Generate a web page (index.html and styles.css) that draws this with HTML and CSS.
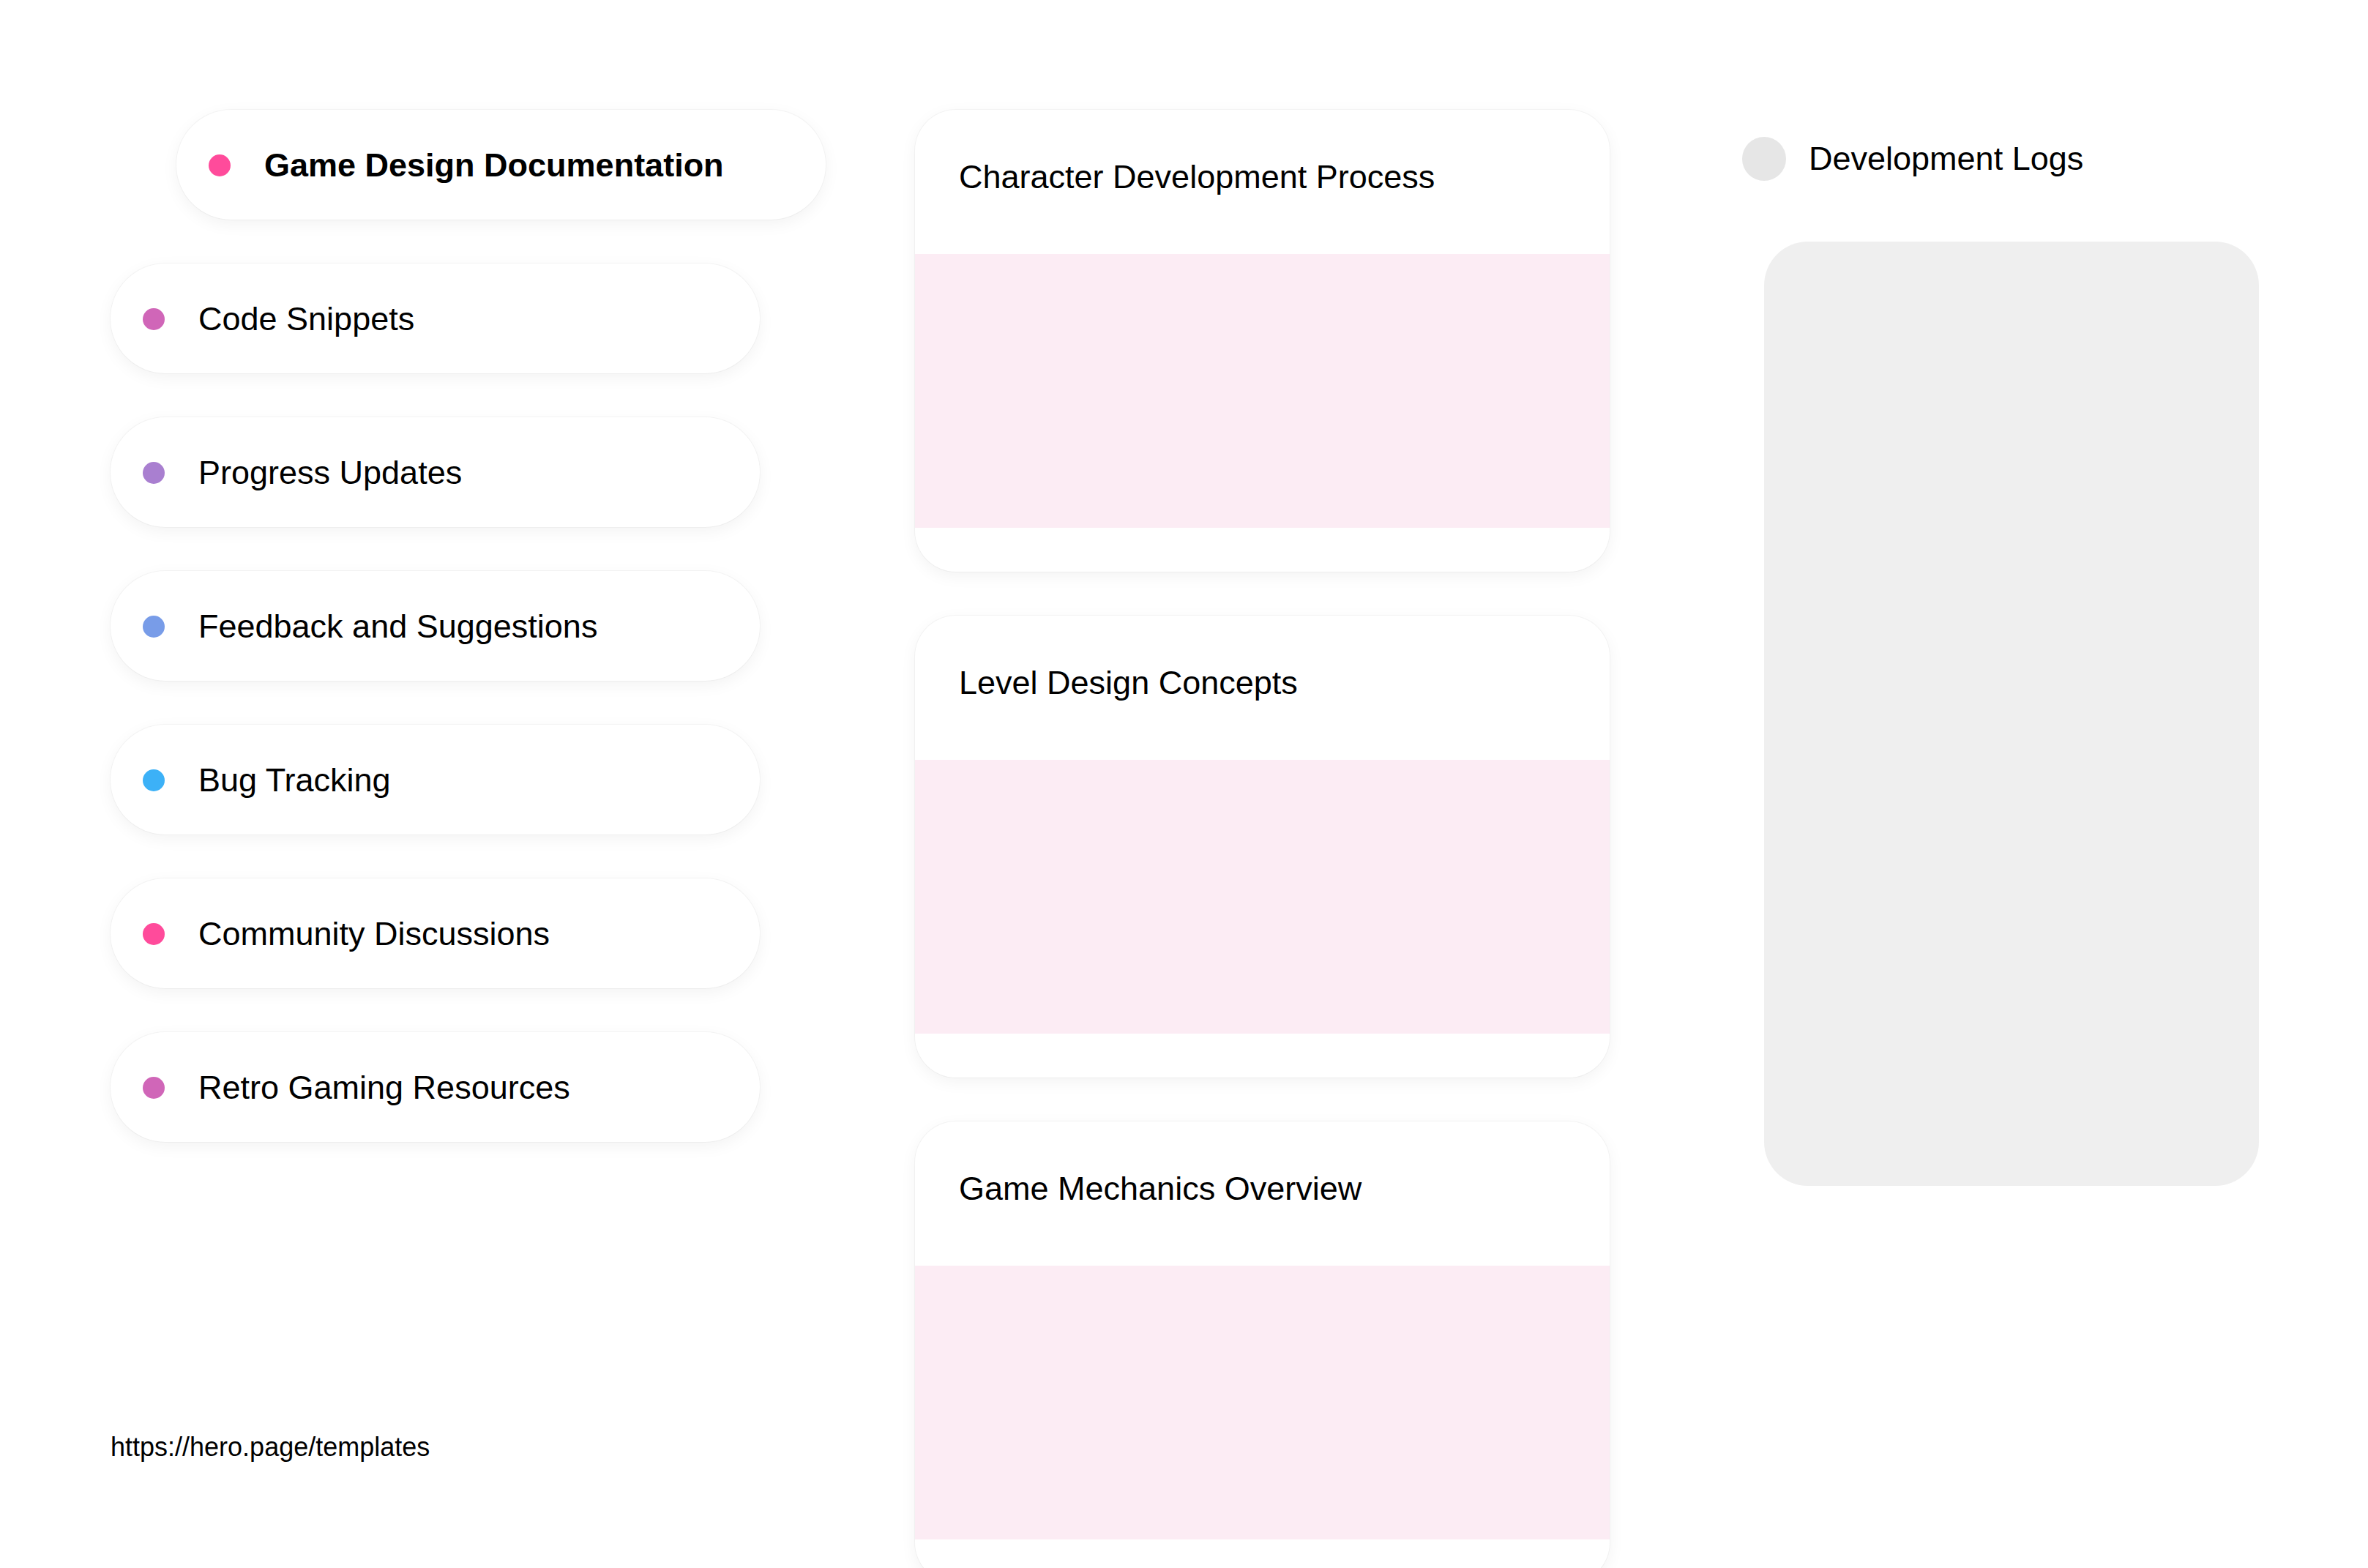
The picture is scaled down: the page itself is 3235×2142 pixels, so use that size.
FILE: index.html
```html
<!DOCTYPE html>
<html lang="en">
<head>
<meta charset="utf-8">
<title>Game Dev Hub</title>
<link rel="stylesheet" href="styles.css">
</head>
<body>
<div class="page">
  <nav class="sidebar">
    <div class="nav-item active"><span class="dot dot-pink"></span><span class="nav-label">Game Design Documentation</span></div>
    <div class="nav-item"><span class="dot dot-orchid"></span><span class="nav-label">Code Snippets</span></div>
    <div class="nav-item"><span class="dot dot-lavender"></span><span class="nav-label">Progress Updates</span></div>
    <div class="nav-item"><span class="dot dot-blue"></span><span class="nav-label">Feedback and Suggestions</span></div>
    <div class="nav-item"><span class="dot dot-sky"></span><span class="nav-label">Bug Tracking</span></div>
    <div class="nav-item"><span class="dot dot-pink"></span><span class="nav-label">Community Discussions</span></div>
    <div class="nav-item"><span class="dot dot-orchid"></span><span class="nav-label">Retro Gaming Resources</span></div>
    <div class="footer-link">https://hero.page/templates</div>
  </nav>

  <main class="cards">
    <section class="card">
      <h2 class="card-title">Character Development Process</h2>
      <div class="card-media"></div>
    </section>
    <section class="card">
      <h2 class="card-title">Level Design Concepts</h2>
      <div class="card-media"></div>
    </section>
    <section class="card">
      <h2 class="card-title">Game Mechanics Overview</h2>
      <div class="card-media"></div>
    </section>
  </main>

  <aside class="logs">
    <div class="logs-header"><span class="logs-avatar"></span><span class="logs-title">Development Logs</span></div>
    <div class="logs-panel"></div>
  </aside>
</div>
</body>
</html>
```

FILE: styles.css
```css
html, body {
  margin: 0;
  padding: 0;
  background: #ffffff;
}

body {
  font-family: "Liberation Sans", Arial, sans-serif;
  color: #000000;
  overflow: hidden;
}

.page {
  display: flex;
  align-items: flex-start;
  padding: 150px 0 0 151px;
}

.sidebar {
  width: 887px;
  display: flex;
  flex-direction: column;
  gap: 60px;
  flex: none;
}

.nav-item {
  height: 150px;
  box-sizing: border-box;
  width: 887px;
  border-radius: 75px;
  background: #ffffff;
  box-shadow: 0 0 0 1px rgba(0, 0, 0, 0.035), 0 6px 22px rgba(0, 0, 0, 0.05);
  display: flex;
  align-items: center;
  padding: 2px 44px 0;
  gap: 46px;
  font-size: 45px;
}

.nav-item.active {
  margin-left: 90px;
  font-weight: bold;
}

.dot {
  width: 30px;
  height: 30px;
  border-radius: 50%;
  flex: none;
}

.dot-pink { background: #ff4b9b; }
.dot-orchid { background: #d066b8; }
.dot-lavender { background: #a97fd0; }
.dot-blue { background: #789ce8; }
.dot-sky { background: #3cb1f7; }

.footer-link {
  margin-top: 336px;
  font-size: 36px;
  line-height: 41px;
}

.cards {
  margin-left: 212px;
  width: 949px;
  flex: none;
  display: flex;
  flex-direction: column;
  gap: 60px;
}

.card {
  background: #ffffff;
  border-radius: 56px;
  box-shadow: 0 0 0 1px rgba(0, 0, 0, 0.035), 0 6px 22px rgba(0, 0, 0, 0.05);
  padding-bottom: 60px;
  overflow: hidden;
}

.card-title {
  margin: 0;
  padding: 66px 60px 79px;
  font-size: 45px;
  font-weight: normal;
  line-height: 52px;
}

.card-media {
  height: 374px;
  background: #fcecf4;
}

.logs {
  margin-left: 181px;
  width: 706px;
  flex: none;
  display: flex;
  flex-direction: column;
  align-items: flex-start;
}

.logs-header {
  margin-top: 37px;
  display: flex;
  align-items: center;
  gap: 31px;
  font-size: 45px;
}

.logs-avatar {
  width: 60px;
  height: 60px;
  border-radius: 50%;
  background: #e6e6e6;
  flex: none;
}

.logs-panel {
  margin-top: 83px;
  margin-left: 30px;
  width: 676px;
  height: 1290px;
  border-radius: 60px;
  background: #efefef;
}
```
